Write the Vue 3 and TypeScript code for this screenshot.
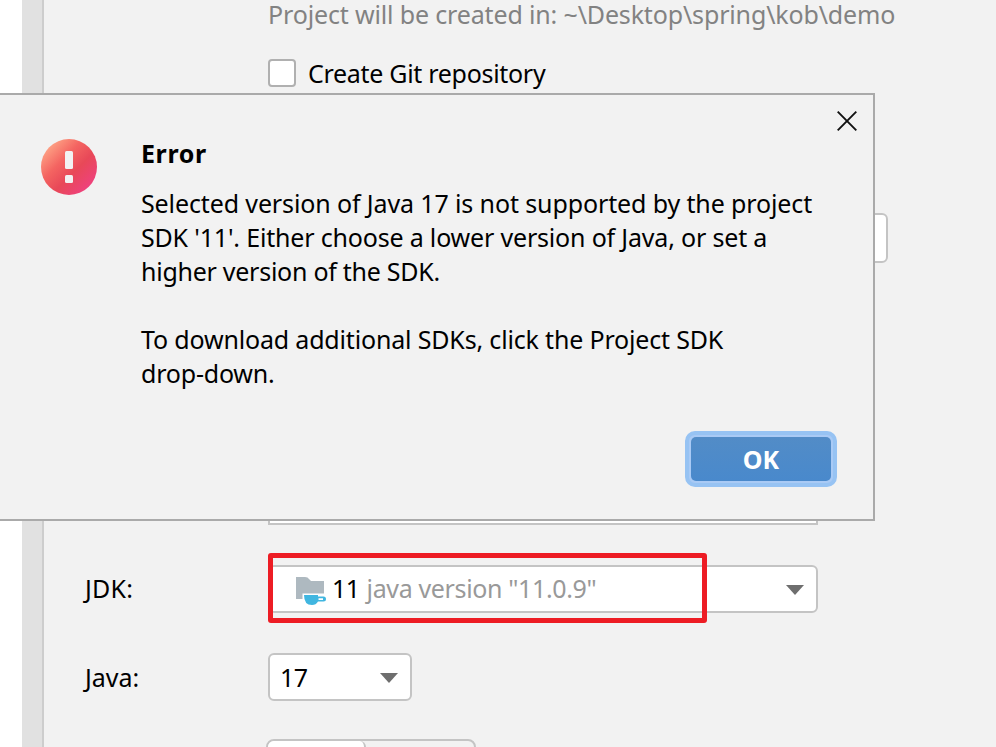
<script setup lang="ts">
import { ref } from 'vue'

const gitRepository = ref(false)
const dialogOpen = ref(true)

interface MessageLine {
  text: string
  name: string
}

const messageLines: MessageLine[] = [
  { text: 'Selected version of Java 17 is not supported by the project', name: 'selected' },
  { text: "SDK '11'. Either choose a lower version of Java, or set a", name: 'either' },
  { text: 'higher version of the SDK.', name: 'higher' },
  { text: '', name: 'blank' },
  { text: 'To download additional SDKs, click the Project SDK', name: 'download' },
  { text: 'drop-down.', name: 'dropdown' },
]
</script>

<template>
  <div class="window">
    <aside class="sidebar"></aside>
    <div class="splitter"></div>
    <main class="form">
      <div class="hint"><span>Project will be created in: ~\Desktop\spring\kob\demo</span></div>
      <div class="git-row" @click="gitRepository = !gitRepository">
        <i class="checkbox" :class="{ checked: gitRepository }"></i>
        <span class="git-label">Create Git repository</span>
      </div>
      <div class="field location"></div>
      <div class="field package"></div>
      <div class="row jdk-row">
        <label><span class="jdk-label">JDK:</span></label>
        <div class="combo jdk">
          <svg class="folder" width="32" height="30" viewBox="0 0 32 30">
            <path d="M0 1h9q3 0 4 2l2 2h13v14H7v4H0z" fill="#aeb9c0" />
            <path d="M6.500 17.500H28v2H8v4H6.500z" fill="#fff" />
            <path d="M8 19h14v1.500h5.500q2.500 0 2.500 2.500t-2.500 2.500H22q-2 3.500-6 3.500-8 0-8-10zM22.500 22.300v1.600H27v-1.600z" fill="#40b6e0" fill-rule="evenodd" />
          </svg>
          <span class="sdk-name">11</span>
          <span class="sdk-version">java version "11.0.9"</span>
          <svg class="arrow" width="18" height="10" viewBox="0 0 18 10"><path d="M0 0h18L9 10z" fill="#6e6e6e" /></svg>
          <div class="highlight"></div>
        </div>
      </div>
      <div class="row java-row">
        <label><span class="java-label">Java:</span></label>
        <div class="combo java">
          <span class="java-value">17</span>
          <svg class="arrow" width="18" height="10" viewBox="0 0 18 10"><path d="M0 0h18L9 10z" fill="#6e6e6e" /></svg>
        </div>
      </div>
      <div class="segments"><div class="segment"></div></div>
    </main>

    <section v-if="dialogOpen" class="dialog" role="alertdialog">
      <svg class="error-icon" width="56" height="56" viewBox="0 0 56 56">
        <defs>
          <linearGradient id="error-fill" x1="0.12" y1="0.12" x2="0.88" y2="0.88">
            <stop offset="0" stop-color="#fea486" />
            <stop offset="0.34" stop-color="#f46461" />
            <stop offset="0.62" stop-color="#e84858" />
            <stop offset="1" stop-color="#ef417f" />
          </linearGradient>
        </defs>
        <circle cx="28" cy="28" r="28" fill="url(#error-fill)" />
        <rect x="24" y="12" width="8" height="18" rx="1.500" fill="#f2f2f2" />
        <rect x="24" y="36" width="8" height="8" rx="1.500" fill="#f2f2f2" />
      </svg>
      <div class="body">
        <h1><span>Error</span></h1>
        <p v-for="line in messageLines" :key="line.name"><span :class="line.name">{{ line.text }}</span></p>
        <div class="actions"><button class="ok" @click="dialogOpen = false"><span>OK</span></button></div>
      </div>
      <svg class="close" width="20" height="20" viewBox="0 0 20 20" @click="dialogOpen = false">
        <path d="M.7.7l18.600 18.600M19.300.7L.7 19.300" stroke="#111" stroke-width="1.900" fill="none" />
      </svg>
    </section>
  </div>
</template>

<style>
body {
  margin: 0;
  overflow: hidden;
}
</style>

<style scoped>
.window {
  position: relative;
  display: flex;
  width: 996px;
  height: 747px;
  overflow: hidden;
  box-sizing: border-box;
  background: #f2f2f2;
  color: #000;
  font: 25px/34px "Noto Sans", "Open Sans", sans-serif;
  white-space: pre;
}
.window * {
  box-sizing: border-box;
}
.sidebar {
  width: 22px;
  background: #fff;
}
.splitter {
  width: 22px;
  background: #e1e1e1;
  border-right: 2px solid #cdcdcd;
}
.form {
  flex: 1;
  display: flex;
  flex-direction: column;
  padding-left: 40px;
}
.hint {
  flex: none;
  height: 59px;
  margin-left: 184px;
  line-height: 28px;
  letter-spacing: -0.15px;
  color: #828282;
}
.git-row {
  flex: none;
  display: flex;
  height: 28px;
  margin-left: 184px;
  gap: 12px;
  line-height: 29px;
  letter-spacing: -0.3px;
}
.checkbox {
  width: 28px;
  height: 28px;
  border: 2px solid #b0b0b0;
  border-radius: 4px;
  background: #fff;
}
.checkbox.checked {
  background: #4f8bc9;
}
.field {
  flex: none;
  margin-left: 184px;
  border: 2px solid #c4c4c4;
  background: #fff;
}
.location {
  width: 620px;
  height: 50px;
  margin-top: 126px;
  border-radius: 6px;
}
.package {
  width: 550px;
  height: 48px;
  margin-top: 214px;
}
.row {
  flex: none;
  display: flex;
  height: 48px;
}
.row label {
  width: 184px;
  padding-left: 1px;
  line-height: 48px;
}
.combo {
  position: relative;
  display: flex;
  align-items: center;
  padding-right: 12px;
  border: 2px solid #c4c4c4;
  border-radius: 6px;
  background: #fff;
}
.arrow {
  margin-top: 2px;
  margin-left: auto;
}
.jdk-row {
  margin-top: 40px;
}
.jdk-row label {
  line-height: 46px;
  letter-spacing: 0.2px;
}
.jdk {
  width: 550px;
  padding-left: 26px;
}
.jdk > span {
  padding-bottom: 3px;
}
.folder {
  margin: 4px 4px 0 0;
}
.sdk-name {
  letter-spacing: -0.5px;
}
.sdk-version {
  margin-left: 7px;
  letter-spacing: -0.36px;
  color: #999;
}
.highlight {
  position: absolute;
  top: -14px;
  left: -2px;
  width: 439px;
  height: 70px;
  border: 5px solid #ed1c24;
  border-radius: 3px;
}
.java-row {
  margin-top: 40px;
}
.java {
  width: 144px;
  padding-left: 10px;
}
.java-value {
  letter-spacing: -0.5px;
}
.segments {
  flex: none;
  display: flex;
  width: 210px;
  height: 48px;
  margin: 38px 0 0 182px;
  border: 2px solid #c4c4c4;
  border-radius: 8px;
}
.segment {
  width: 98px;
  border-right: 2px solid #c4c4c4;
  border-radius: 6px;
  background: #fff;
}
.dialog {
  position: absolute;
  top: 93px;
  left: -2px;
  display: flex;
  width: 877px;
  height: 428px;
  padding: 44px 36px 32px 41px;
  border: 2px solid #aaa;
  background: #f2f2f2;
}
.body {
  display: flex;
  flex: 1;
  flex-direction: column;
  margin-left: 44px;
}
h1 {
  height: 47px;
  margin: 0;
  font-size: 25px;
  font-weight: 700;
  line-height: 29px;
  letter-spacing: 0.6px;
}
p {
  height: 34px;
  margin: 0;
}
.selected {
  letter-spacing: -0.12px;
}
.either {
  letter-spacing: -0.18px;
}
.higher {
  letter-spacing: -0.26px;
}
.download {
  letter-spacing: -0.17px;
}
.dropdown {
  letter-spacing: -0.2px;
}
.actions {
  display: flex;
  justify-content: flex-end;
  margin-top: auto;
}
.ok {
  width: 152px;
  height: 56px;
  padding: 0;
  border: 4px solid #97c3f3;
  border-radius: 10px;
  background: #a9caf5;
  color: #fff;
  font: 700 25px/44px "Noto Sans", "Open Sans", sans-serif;
}
.ok span {
  display: block;
  height: 44px;
  margin: 0 2px;
  border-radius: 5px;
  background: linear-gradient(#528cc7, #4989cc);
}
.close {
  position: absolute;
  top: 16px;
  right: 16px;
}
</style>
